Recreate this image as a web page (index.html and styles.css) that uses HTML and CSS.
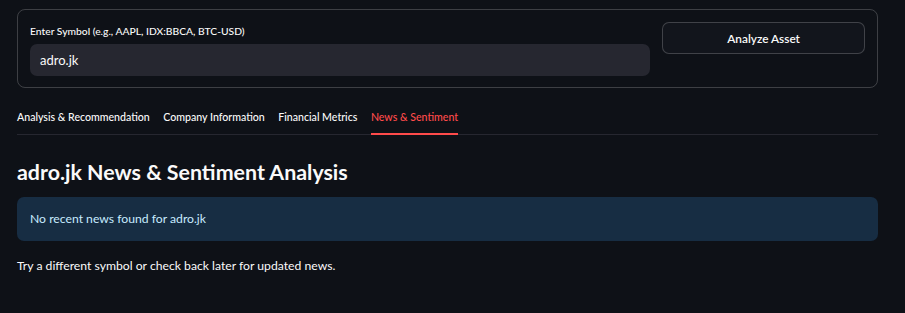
FILE: index.html
```html
<!DOCTYPE html>
<html lang="en">
<head>
    <meta charset="UTF-8">
    <meta name="viewport" content="width=device-width, initial-scale=1.0">
    <title>Asset Analyzer</title>
    <link rel="stylesheet" href="styles.css">
</head>
<body>
    <main class="main">
        <form class="symbol-form" id="symbolForm">
            <div class="input-group">
                <label for="symbol">Enter Symbol (e.g., AAPL, IDX:BBCA, BTC-USD)</label>
                <input type="text" id="symbol" name="symbol" value="adro.jk">
            </div>
            <div class="button-container">
                <button type="submit">Analyze Asset</button>
            </div>
        </form>

        <div class="tabs">
            <button class="tab">Analysis &amp; Recommendation</button>
            <button class="tab">Company Information</button>
            <button class="tab">Financial Metrics</button>
            <button class="tab active">News &amp; Sentiment</button>
        </div>

        <h3 class="section-title">adro.jk News &amp; Sentiment Analysis</h3>
        <div class="info-box">No recent news found for adro.jk</div>
        <p class="note">Try a different symbol or check back later for updated news.</p>
    </main>
</body>
</html>
```

FILE: styles.css
```css
body {
    margin: 0;
    background-color: #0e1117;
    color: #fafafa;
    font-family: Lato, "Noto Sans", sans-serif;
}
.main {
    padding: 9px 27px 0 17px;
}
.symbol-form {
    display: grid;
    grid-template-columns: 621fr 203fr;
    gap: 12px;
    padding: 12px 12px 11px 12px;
    border: 1px solid rgba(250, 250, 250, 0.2);
    border-radius: 8px;
}
.input-group label {
    display: block;
    font-size: 10.3px;
    font-weight: 500;
    line-height: 18px;
    margin-bottom: 4px;
}
.input-group input {
    box-sizing: border-box;
    width: 100%;
    height: 32px;
    padding: 0 10px;
    border: none;
    border-radius: 7px;
    background-color: #262730;
    color: #fafafa;
    font-family: inherit;
    font-size: 13px;
    outline: none;
}
.button-container button {
    width: 100%;
    height: 32px;
    background-color: #12151c;
    color: #fafafa;
    border: 1px solid rgba(250, 250, 250, 0.2);
    border-radius: 7px;
    font-family: inherit;
    font-size: 11.8px;
    font-weight: 600;
    cursor: pointer;
}
.tabs {
    display: flex;
    gap: 13.5px;
    margin-top: 16px;
    border-bottom: 1px solid #262730;
}
.tab {
    background: none;
    border: none;
    border-bottom: 2px solid transparent;
    margin-bottom: -1px;
    padding: 5px 0 7px;
    color: #fafafa;
    font-family: inherit;
    font-size: 10.6px;
    font-weight: 500;
    line-height: 17px;
    cursor: pointer;
}
.tab.active {
    color: #ff4b4b;
    border-bottom-color: #ff4b4b;
}
.section-title {
    margin: 22px 0 10px;
    font-size: 21.4px;
    line-height: 30px;
    font-weight: 700;
}
.info-box {
    padding: 13px 13px;
    line-height: 18px;
    font-size: 12.2px;
    border-radius: 7px;
    background-color: #172d43;
    color: #c7ebff;
}
.note {
    margin: 16px 0 0;
    font-size: 12.2px;
    line-height: 18px;
}
```
